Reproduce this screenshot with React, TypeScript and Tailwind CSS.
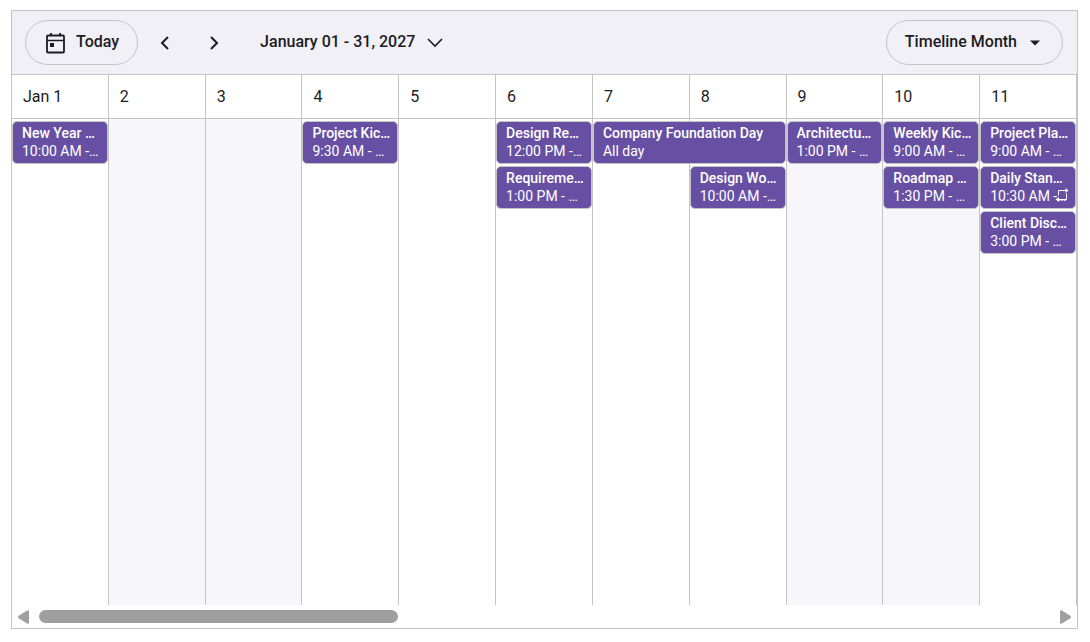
import { useState } from 'react'
import { clsx } from 'clsx'

const DAYS_IN_MONTH = 31

const days = [
  { label: 'Jan 1', weekend: false },
  { label: '2', weekend: true },
  { label: '3', weekend: true },
  { label: '4', weekend: false },
  { label: '5', weekend: false },
  { label: '6', weekend: false },
  { label: '7', weekend: false },
  { label: '8', weekend: false },
  { label: '9', weekend: true },
  { label: '10', weekend: true },
  { label: '11', weekend: false },
]

interface CalendarEvent {
  title: string
  time: string
  day: number
  row: number
  span?: number
  recurring?: boolean
}

const events: CalendarEvent[] = [
  { title: 'New Year Celebration', time: '10:00 AM - 12:00 PM', day: 1, row: 1 },
  { title: 'Project Kickoff', time: '9:30 AM - 11:00 AM', day: 4, row: 1 },
  { title: 'Design Review', time: '12:00 PM - 1:00 PM', day: 6, row: 1 },
  { title: 'Requirement Review', time: '1:00 PM - 2:30 PM', day: 6, row: 2 },
  { title: 'Company Foundation Day', time: 'All day', day: 7, row: 1, span: 2 },
  { title: 'Design Workshop', time: '10:00 AM - 12:00 PM', day: 8, row: 2 },
  { title: 'Architecture Review', time: '1:00 PM - 2:30 PM', day: 9, row: 1 },
  { title: 'Weekly Kickoff', time: '9:00 AM - 10:00 AM', day: 10, row: 1 },
  { title: 'Roadmap Planning', time: '1:30 PM - 3:00 PM', day: 10, row: 2 },
  { title: 'Project Planning', time: '9:00 AM - 10:00 AM', day: 11, row: 1 },
  { title: 'Daily Standup', time: '10:30 AM - 11:00 AM', day: 11, row: 2, recurring: true },
  { title: 'Client Discussion', time: '3:00 PM - 4:00 PM', day: 11, row: 3 },
]

function CalendarIcon() {
  return (
    <svg width="20" height="22" viewBox="0 0 20 22" fill="none" stroke="currentColor" strokeWidth="2">
      <rect x="1" y="3.5" width="17" height="17" rx="1" strokeWidth="1.8" />
      <path d="M1 8.5h17" strokeWidth="1.5" />
      <path d="M5 1v2.5M14 1v2.5" strokeWidth="1.8" />
      <rect x="4" y="11" width="4" height="4" fill="currentColor" stroke="none" />
    </svg>
  )
}

function RepeatIcon() {
  return (
    <svg width="14" height="14" viewBox="0 0 14 14" fill="none" stroke="currentColor" strokeWidth="1">
      <path d="M3.5 7.5v-5h8M11.5 5.5v6h-8" />
      <path d="M10.5 0l3 2.5-3 2.5zM4 9l-3.5 2.5L4 14z" fill="currentColor" stroke="none" />
    </svg>
  )
}

function EventCard({ event }: { event: CalendarEvent }) {
  const span = event.span ?? 1

  return (
    <div
      className="relative z-10 mt-0.5 mr-px h-[43px] rounded-[5px] border border-[#c4c4c4] bg-[#6750a4] py-0.5 pr-1.5 pl-[9px] text-sm leading-[18px] text-white"
      style={{ gridColumn: `${event.day} / span ${span}`, gridRow: event.row }}
    >
      <div className="truncate font-medium">{event.title}</div>
      <div className="truncate">{event.time}</div>
      {event.recurring && (
        <span className="absolute right-1.5 bottom-1.5">
          <RepeatIcon />
        </span>
      )}
    </div>
  )
}

function Toolbar() {
  return (
    <header className="flex items-center border-b border-[#c4c4c4] bg-[#f1f0f7] py-[9px] pr-3.5 pl-[13px] text-base font-medium">
      <button className="flex h-[45px] items-center gap-2.5 rounded-full border border-[#c4c4c4] pr-[18px] pl-5">
        <CalendarIcon />
        <span className="pb-0.5">Today</span>
      </button>
      <button aria-label="Previous" className="ml-[14px] flex h-10 w-[25px] items-center justify-center">
        <svg width="10" height="14" viewBox="0 0 10 14" fill="none" stroke="currentColor" strokeWidth="2">
          <path d="M8 1L2 7l6 6" />
        </svg>
      </button>
      <button aria-label="Next" className="ml-6 flex h-10 w-[25px] items-center justify-center">
        <svg width="10" height="14" viewBox="0 0 10 14" fill="none" stroke="currentColor" strokeWidth="2">
          <path d="M2 1l6 6-6 6" />
        </svg>
      </button>
      <button className="ml-[34px] flex h-10 items-center gap-3">
        <span className="pb-0.5">January 01 - 31, 2027</span>
        <svg width="16" height="10" viewBox="0 0 16 10" fill="none" stroke="currentColor" strokeWidth="1.6">
          <path d="M1 1l7 7 7-7" />
        </svg>
      </button>
      <button className="ml-auto flex h-[45px] items-center gap-3 rounded-full border border-[#c4c4c4] pr-[21px] pl-[18px]">
        <span className="pb-0.5">Timeline Month</span>
        <svg width="12" height="6" viewBox="0 0 12 6" fill="currentColor">
          <path d="M1 0.5h10L6 5.5z" />
        </svg>
      </button>
    </header>
  )
}

function Scrollbar({ firstDay, onScroll }: { firstDay: number; onScroll: (step: number) => void }) {
  return (
    <div className="flex h-[23px] items-center gap-2.5 px-1.5 text-[#9f9f9f]">
      <button aria-label="Scroll left" onClick={() => onScroll(-1)}>
        <svg width="11" height="14" viewBox="0 0 11 14" fill="currentColor" className="block">
          <path d="M11 1.5v11q0 1.5-1.5 1.2L1 8.5q-2-1.5 0-3L9.5.3Q11 0 11 1.5z" />
        </svg>
      </button>
      <div className="h-[13px] flex-1">
        <div
          className="h-full rounded-full bg-[#9f9f9f]"
          style={{
            width: `${(days.length / DAYS_IN_MONTH) * 100}%`,
            marginLeft: `${(firstDay / DAYS_IN_MONTH) * 100}%`,
          }}
        />
      </div>
      <button aria-label="Scroll right" onClick={() => onScroll(1)}>
        <svg width="11" height="14" viewBox="0 0 11 14" fill="currentColor" className="block">
          <path d="M0 1.5v11q0 1.5 1.5 1.2L10 8.5q2-1.5 0-3L1.5.3Q0 0 0 1.5z" />
        </svg>
      </button>
    </div>
  )
}

export default function App() {
  const [firstDay, setFirstDay] = useState(0)

  const handleScroll = (step: number) => {
    setFirstDay((day) => Math.min(Math.max(day + step, 0), DAYS_IN_MONTH - days.length))
  }

  return (
    <div className="flex min-h-screen bg-white pt-2.5 pr-3 pb-[13px] pl-[11px] font-[Roboto,sans-serif] text-[#1c1b1f]">
      <div className="flex min-w-0 flex-1 flex-col border border-[#c4c4c4]">
        <Toolbar />

        {/* Day headers */}
        <div className="grid grid-cols-11 border-b border-[#c4c4c4]">
          {days.map((day) => (
            <div key={day.label} className="flex h-[43px] items-center border-r border-[#c4c4c4] pl-[11px] text-base">
              {day.label}
            </div>
          ))}
        </div>

        {/* Day columns with the events laid over them */}
        <div className="grid flex-1 grid-cols-11 grid-rows-[45px_45px_45px_1fr]">
          {days.map((day, index) => (
            <div
              key={day.label}
              className={clsx('border-r border-[#c4c4c4]', day.weekend && 'bg-[#f7f6fb]')}
              style={{ gridColumn: index + 1, gridRow: '1 / -1' }}
            />
          ))}
          {events.map((event) => (
            <EventCard key={event.title} event={event} />
          ))}
        </div>

        <Scrollbar firstDay={firstDay} onScroll={handleScroll} />
      </div>
    </div>
  )
}
